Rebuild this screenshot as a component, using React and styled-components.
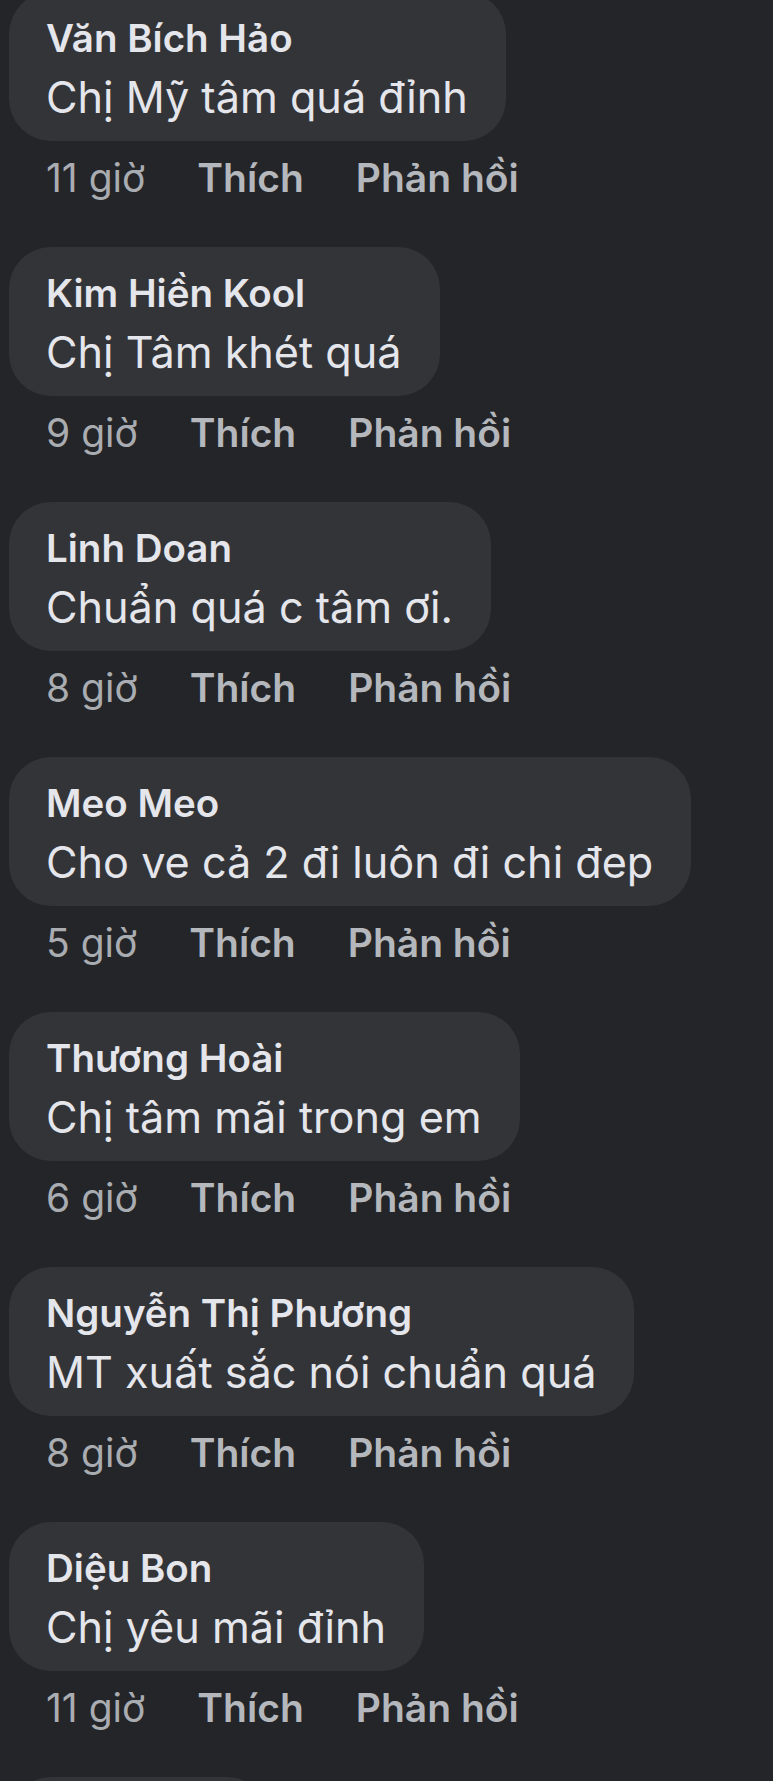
import React from "react";
import styled, { createGlobalStyle } from "styled-components";

const COMMENTS = [
  { name: "Văn Bích Hảo", text: "Chị Mỹ tâm quá đỉnh", time: "11 giờ" },
  { name: "Kim Hiền Kool", text: "Chị Tâm khét quá", time: "9 giờ" },
  { name: "Linh Doan", text: "Chuẩn quá c tâm ơi.", time: "8 giờ" },
  { name: "Meo Meo", text: "Cho ve cả 2 đi luôn đi chi đep", time: "5 giờ" },
  { name: "Thương Hoài", text: "Chị tâm mãi trong em", time: "6 giờ" },
  { name: "Nguyễn Thị Phương", text: "MT xuất sắc nói chuẩn quá", time: "8 giờ" },
  { name: "Diệu Bon", text: "Chị yêu mãi đỉnh", time: "11 giờ" },
  { name: "Ngọc Anh", text: "Tuyệt vời", time: "7 giờ" },
];

const GlobalStyle = createGlobalStyle`
  html, body {
    margin: 0;
    padding: 0;
    background: #242528;
    overflow: hidden;
  }
  body {
    font-family: Inter, "Noto Sans", "DejaVu Sans", sans-serif;
    -webkit-font-smoothing: antialiased;
  }
`;

const Page = styled.div`
  height: 1781px;
  overflow: hidden;
  background: #242528;
`;

const List = styled.div`
  display: flex;
  flex-direction: column;
  align-items: flex-start;
  margin-top: -8px;
  padding-left: 9px;
`;

const Comment = styled.div`
  display: flex;
  flex-direction: column;
  align-items: flex-start;
  margin-bottom: 49px;
`;

const Bubble = styled.div`
  background: #333438;
  border-radius: 42px;
  padding: 22px 38px 9px 37px;
  box-sizing: border-box;
  height: 149px;
`;

const Name = styled.div`
  color: #e4e6eb;
  font-size: 38.5px;
  font-weight: 600;
  line-height: 48px;
  white-space: nowrap;
`;

const Text = styled.div`
  color: #e4e6eb;
  font-size: 43.2px;
  font-weight: 400;
  line-height: 70px;
  white-space: nowrap;
`;

const Meta = styled.div`
  display: flex;
  gap: 52px;
  margin-top: 17px;
  padding-left: 37px;
  line-height: 40px;
  font-size: 39px;
  white-space: nowrap;
`;

const Time = styled.span`
  color: #a9acb1;
  font-weight: 400;
`;

const Action = styled.span`
  color: #b4b7bc;
  font-weight: 600;
`;

export default function App() {
  return (
    <Page>
      <GlobalStyle />
      <List>
        {COMMENTS.map((c, i) => (
          <Comment key={i}>
            <Bubble>
              <Name>{c.name}</Name>
              <Text>{c.text}</Text>
            </Bubble>
            <Meta>
              <Time>{c.time}</Time>
              <Action>Thích</Action>
              <Action>Phản hồi</Action>
            </Meta>
          </Comment>
        ))}
      </List>
    </Page>
  );
}
